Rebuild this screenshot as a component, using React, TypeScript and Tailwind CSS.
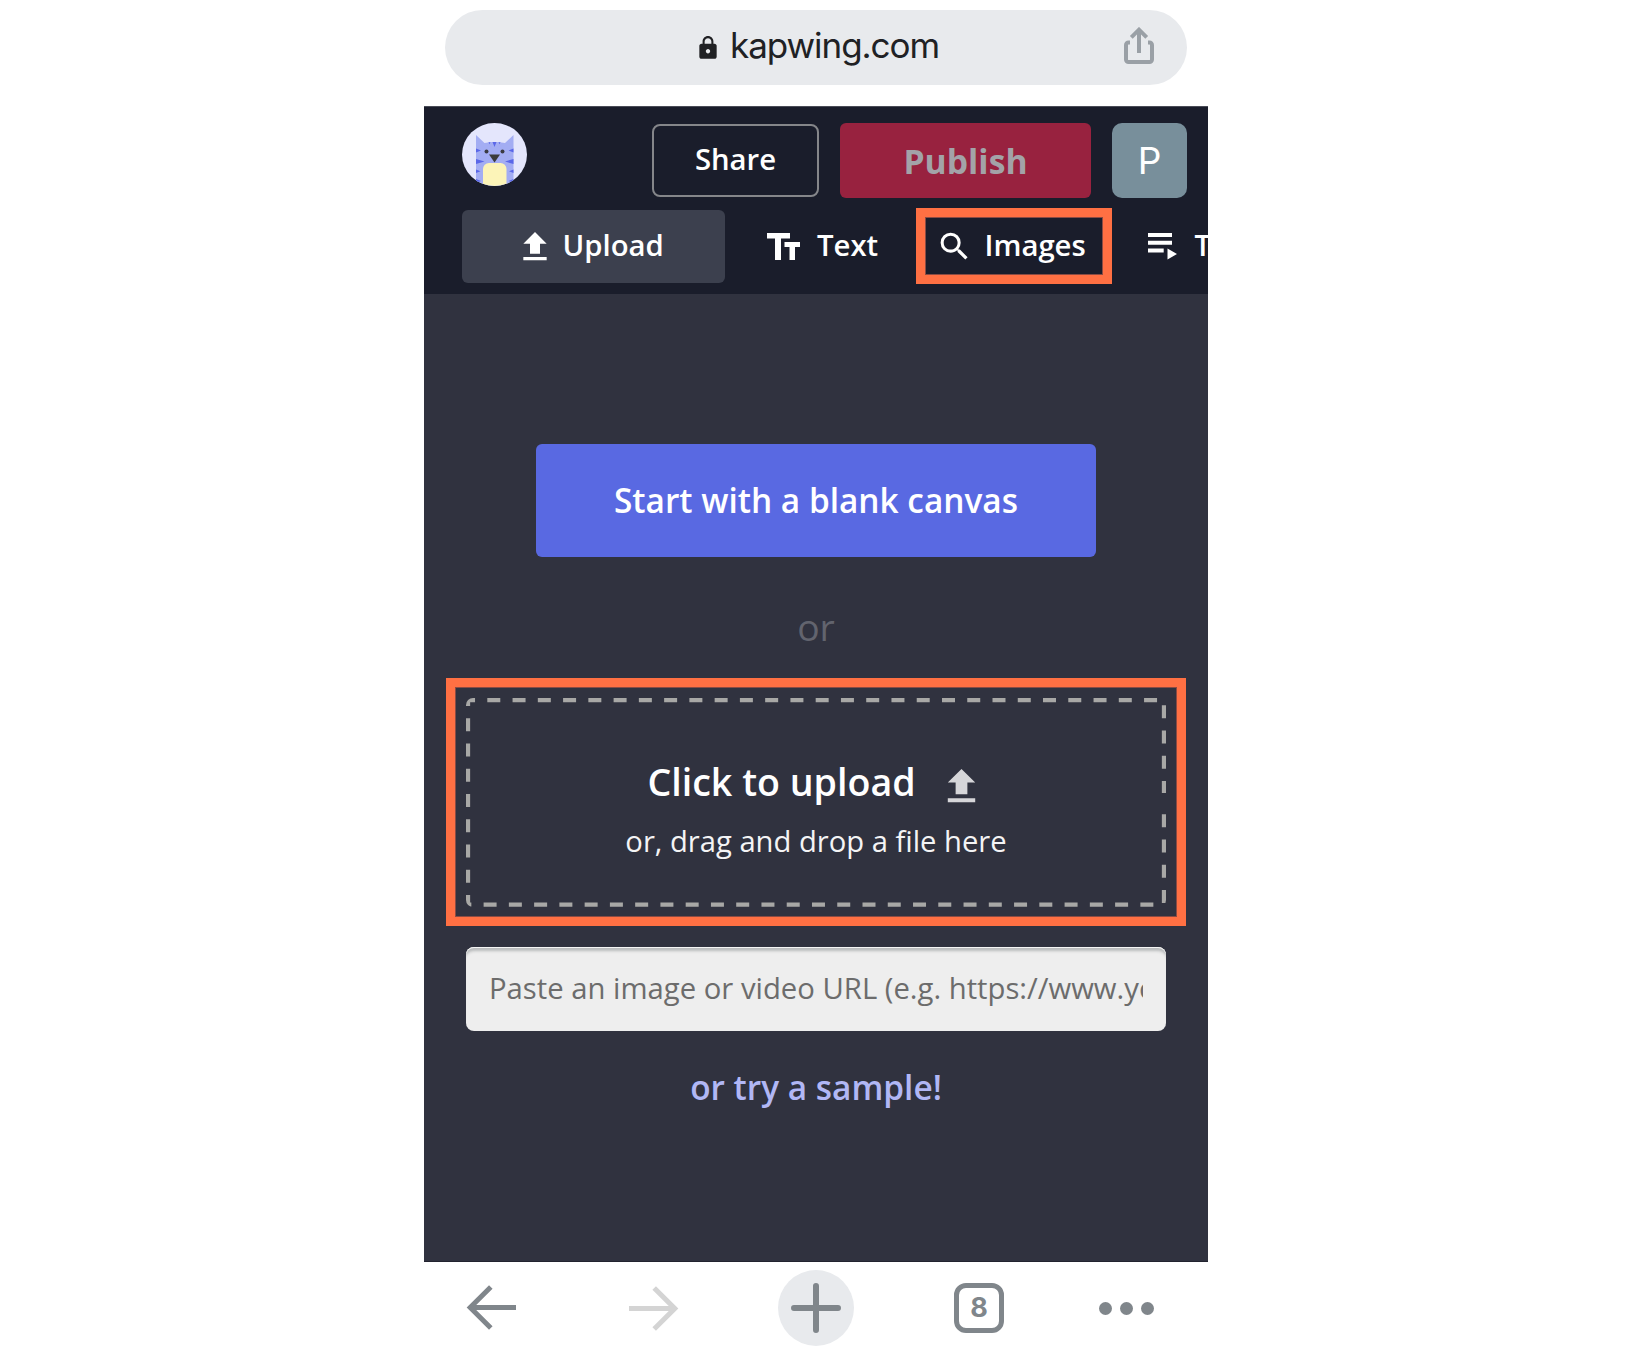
import type { ReactNode } from 'react';
import { MdFileUpload, MdLock, MdSearch } from 'react-icons/md';

function ShareIcon() {
  return (
    <svg width="30" height="37" viewBox="0 0 30 37" fill="none" stroke="#9aa0a6" strokeWidth="4">
      <path d="M6 15.5H4.5A2.5 2.5 0 0 0 2 18v14.500a2.500 2.500 0 0 0 2.500 2.500h21a2.500 2.500 0 0 0 2.500-2.500V18a2.500 2.500 0 0 0-2.500-2.500H24" />
      <path d="M15 26V3M7.300 10.300L15 2.700l7.700 7.600" />
    </svg>
  );
}

function CatAvatar() {
  return (
    <svg width="65" height="63" viewBox="0 0 65 63" className="shrink-0">
      <defs>
        <clipPath id="avatar">
          <ellipse cx="32.500" cy="31.500" rx="32.500" ry="31.500" />
        </clipPath>
      </defs>
      <g clipPath="url(#avatar)">
        <rect width="65" height="63" fill="#e4e6fc" />
        <path d="M14 12l8.500 8q10-2 20.500 0l8.500-8v51H14z" fill="#a3adf3" />
        <path
          d="M14 25.500l5 2-5 2zM14 36l8.500 2.500L14 41zM14 46.500l4.500 1.800-4.500 1.700zM14 56l5 2-5 2zM51.500 25.500l-5 2 5 2zM51.500 36L43 38.500l8.500 2.500zM51.500 46.500L47 48.300l4.500 1.700zM51.500 56l-5 2 5 2zM30.500 19h4l-2 5zM26.500 19.300h2l-1 2zM36.500 19.300h2l-1 2z"
          fill="#5a67e8"
        />
        <circle cx="24.500" cy="28.500" r="2" fill="#3b3b43" />
        <circle cx="40.500" cy="28.500" r="2" fill="#3b3b43" />
        <path d="M27 31.500h11l-5.500 8z" fill="#3b3b3b" />
        <rect x="21" y="40" width="23.500" height="30" rx="6" fill="#fcf4b8" />
      </g>
    </svg>
  );
}

function TextIcon() {
  return (
    <svg width="33" height="27" viewBox="0 0 33 27" fill="currentColor">
      <path d="M0 0h23v5.500h-9V27H8V5.500H0zM17.500 9H33v5h-5v13h-5.500V14h-5z" />
    </svg>
  );
}

function TimelineIcon() {
  return (
    <svg width="29" height="27" viewBox="0 0 29 27" fill="currentColor">
      <path d="M0 0h24v4H0zM0 7.700h24v4H0zM0 15.400h15.700v4H0zM19.500 15.500l9.500 5.500-9.500 5.500z" />
    </svg>
  );
}

function Dashes() {
  return (
    <svg
      width="700"
      height="209"
      viewBox="0 0 700 209"
      className="absolute inset-0 overflow-hidden rounded-[7px]"
      fill="none"
      stroke="#a8a8a6"
      strokeWidth="4.300"
      strokeDasharray="13 12.260"
    >
      <path d="M698 116.300V206.700H2V2H698V95" />
    </svg>
  );
}

function Arrow({ className }: { className?: string }) {
  return (
    <svg width="50" height="46" viewBox="0 0 50 46" fill="none" stroke="currentColor" strokeWidth="5" className={className}>
      <path d="M50 22.500H4M24.800 2L4.200 22.500l20.600 20.600" />
    </svg>
  );
}

function Highlight({ className, children }: { className: string; children: ReactNode }) {
  return (
    <div className={`shrink-0 flex items-center border-[9px] border-[#ff7043] shadow-[inset_0_0_0_1px_#8b4b43] ${className}`}>
      {children}
    </div>
  );
}

export default function App() {
  return (
    <div className="h-[1352px] bg-white font-['Open_Sans',sans-serif]">
      <div className="ml-[424px] flex h-full w-[784px] flex-col">

        {/* ADDRESS BAR */}
        <div className="mx-[21px] mt-[10px] flex h-[75px] shrink-0 items-center rounded-full bg-[#e8eaed] pl-[250px] pr-[33px]">
          <MdLock className="h-[26px] w-[26px] text-[#202124]" />
          <span className="-mt-1 ml-[9px] font-['Inter',sans-serif] text-[35px] leading-none tracking-[-1.050px] text-[#202124]">
            kapwing.com
          </span>
          <div className="-mt-[5px] ml-auto">
            <ShareIcon />
          </div>
        </div>

        {/* HEADER */}
        <header className="mt-[21px] h-[188px] shrink-0 overflow-hidden border-t border-[#4a4c57] bg-[#1a1d2b] pl-[37.500px] pt-4 text-white">
          <div className="flex h-[75px] pr-[21px]">
            <CatAvatar />
            <button className="ml-auto mt-px h-[73px] w-[167px] rounded-lg border-2 border-[#85868a] pb-px text-[29.300px] font-semibold">
              Share
            </button>
            <button className="ml-[21px] h-[75px] w-[251px] rounded-md bg-[#98223f] pt-px text-[33.700px] font-bold text-[#a3a3a8]">
              Publish
            </button>
            <div className="ml-[21px] flex h-[75px] w-[75px] items-center justify-center rounded-[10px] bg-[#788f9b] font-['Inter',sans-serif] text-[37px]">
              P
            </div>
          </div>

          <div className="mt-[10px] flex h-[76px] items-center whitespace-nowrap text-[29.300px] font-semibold">
            <button className="flex h-[73px] w-[263px] shrink-0 items-center rounded-md bg-[#3c404e] pl-[53px] pt-px">
              <MdFileUpload className="h-10 w-10 shrink-0" />
              <span className="-mt-px ml-2">Upload</span>
            </button>
            <div className="ml-[42px] flex w-[149px] shrink-0 items-center">
              <TextIcon />
              <span className="ml-[17.500px]">Text</span>
            </div>
            <Highlight className="h-[76px] w-[196px] pl-[11px]">
              <MdSearch className="h-[37px] w-[37px] shrink-0" />
              <span className="ml-3">Images</span>
            </Highlight>
            <div className="ml-[36.500px] flex shrink-0 items-center">
              <TimelineIcon />
              <span className="ml-[17.500px]">Timeline</span>
            </div>
          </div>
        </header>

        {/* START PANEL */}
        <main className="flex h-[968px] shrink-0 flex-col items-center border-b border-[#22232f] bg-[#30323f]">
          <button className="mt-[150px] h-[113px] w-[560px] rounded-md bg-[#5969e2] text-[33.400px] font-semibold text-white">
            Start with a blank canvas
          </button>
          <p className="mt-[50px] text-[37.300px] leading-10 text-[#62646e]">or</p>

          <Highlight className="mt-[31px] h-[248px] w-[740px] justify-center">
            <div className="relative flex h-[209px] w-[700px] flex-col items-center">
              <Dashes />
              <div className="mt-[60px] flex h-[50px] items-center text-[37.600px] font-semibold text-white">
                <span>Click to upload</span>
                <MdFileUpload className="ml-[22px] mt-2 h-[47px] w-[47px] text-[#d6d6d9]" />
              </div>
              <p className="mt-[13px] text-[29.200px] leading-10 text-[#f4f4f5]">or, drag and drop a file here</p>
            </div>
          </Highlight>

          <div className="mt-[21px] h-[84px] w-[700px] rounded-[8px] bg-[#eee] px-[23px] pt-[21px] shadow-[inset_0_1px_0_#f5f5f5,inset_0_6px_3px_-2px_#b9bbbc]">
            <p className="overflow-hidden whitespace-nowrap text-[29.270px] leading-10 text-[#6c6c6c]">
              Paste an image or video URL (e.g. https://www.youtube.com)
            </p>
          </div>
          <a className="mt-[36px] text-[33.400px] font-semibold leading-10 text-[#b1b7f5]">or try a sample!</a>
        </main>

        {/* BROWSER TOOLBAR */}
        <nav className="flex h-[90px] items-center pl-[42px] pt-0.5 text-[#80868b]">
          <Arrow />
          <Arrow className="ml-[113px] rotate-180 text-[#d4d4d4]" />
          <div className="ml-[99px] flex h-[76px] w-[76px] items-center justify-center rounded-full bg-[#e8eaed]">
            <svg width="50" height="50" viewBox="0 0 50 50" stroke="currentColor" strokeWidth="6" strokeLinecap="round">
              <path d="M25 3v44M3 25h44" />
            </svg>
          </div>
          <div className="ml-[100px] flex h-[50px] w-[50px] items-center justify-center rounded-[12px] border-[5px] border-[#80868b] font-['Inter',sans-serif] text-[27px] font-bold">
            8
          </div>
          <div className="ml-[95px] flex gap-2">
            <span className="h-[13px] w-[13px] rounded-full bg-[#80868b]" />
            <span className="h-[13px] w-[13px] rounded-full bg-[#80868b]" />
            <span className="h-[13px] w-[13px] rounded-full bg-[#80868b]" />
          </div>
        </nav>
      </div>
    </div>
  );
}
